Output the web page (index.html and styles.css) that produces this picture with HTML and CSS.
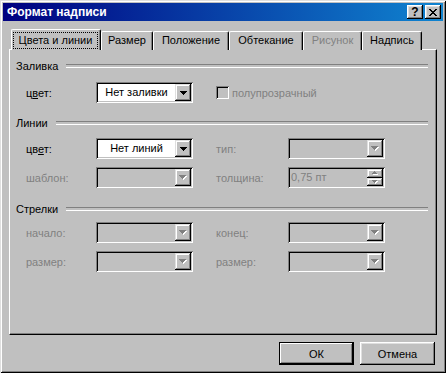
FILE: index.html
```html
<!DOCTYPE html>
<html lang="ru">
<head>
    <meta charset="UTF-8">
    <title>Формат надписи</title>
    <link rel="stylesheet" href="styles.css">
</head>
<body>
    <div class="window">
        <div class="titlebar">
            <span class="title">Формат надписи</span>
            <div class="caption-btns">
                <span class="cap-btn help">?</span>
                <span class="cap-btn close">
                    <svg width="8" height="7" viewBox="0 0 8 7"><path d="M0 0h2v1H0z M6 0h2v1H6z M1 1h2v1H1z M5 1h2v1H5z M2 2h4v1H2z M3 3h2v1H3z M2 4h4v1H2z M1 5h2v1H1z M5 5h2v1H5z M0 6h2v1H0z M6 6h2v1H6z" fill="#000"/></svg>
                </span>
            </div>
        </div>

        <div class="dialog-body">
            <div class="tabs">
                <div class="tab active"><span class="focus">Цвета и линии</span></div>
                <div class="tab tab-size">Размер</div>
                <div class="tab tab-pos">Положение</div>
                <div class="tab tab-wrap">Обтекание</div>
                <div class="tab tab-pic disabled">Рисунок</div>
                <div class="tab tab-box">Надпись</div>
            </div>

            <div class="panel">
                <!-- Заливка -->
                <div class="group-head first"><span>Заливка</span></div>
                <div class="row row-fill">
                    <span class="label">ц<u>в</u>ет:</span>
                    <div class="combo">
                        <div class="field">Нет заливки</div>
                        <div class="drop"><svg width="7" height="4" viewBox="0 0 7 4"><path d="M0 0h7v1H0z M1 1h5v1H1z M2 2h3v1H2z M3 3h1v1H3z" fill="#000"/></svg></div>
                    </div>
                    <span class="checkbox"></span>
                    <span class="label muted">полупрозрачный</span>
                </div>

                <!-- Линии -->
                <div class="group-head"><span>Линии</span></div>
                <div class="row row-first">
                    <span class="label">цв<u>е</u>т:</span>
                    <div class="combo">
                        <div class="field">Нет линий</div>
                        <div class="drop"><svg width="7" height="4" viewBox="0 0 7 4"><path d="M0 0h7v1H0z M1 1h5v1H1z M2 2h3v1H2z M3 3h1v1H3z" fill="#000"/></svg></div>
                    </div>
                    <span class="label label-r muted">тип:</span>
                    <div class="combo disabled">
                        <div class="field"></div>
                        <div class="drop"><svg width="8" height="5" viewBox="0 0 8 5"><path d="M1 1h7v1H1z M2 2h5v1H2z M3 3h3v1H3z M4 4h1v1H4z" fill="#fff"/><path d="M0 0h7v1H0z M1 1h5v1H1z M2 2h3v1H2z M3 3h1v1H3z" fill="#808080"/></svg></div>
                    </div>
                </div>
                <div class="row row-next">
                    <span class="label muted">шаблон:</span>
                    <div class="combo disabled">
                        <div class="field"></div>
                        <div class="drop"><svg width="8" height="5" viewBox="0 0 8 5"><path d="M1 1h7v1H1z M2 2h5v1H2z M3 3h3v1H3z M4 4h1v1H4z" fill="#fff"/><path d="M0 0h7v1H0z M1 1h5v1H1z M2 2h3v1H2z M3 3h1v1H3z" fill="#808080"/></svg></div>
                    </div>
                    <span class="label label-r muted">толщина:</span>
                    <div class="combo disabled spinner">
                        <div class="field value">0,75 пт</div>
                        <div class="spin">
                            <div class="spin-btn"><svg width="6" height="4" viewBox="0 0 6 4"><path d="M3 1h1v1H3z M2 2h3v1H2z M1 3h5v1H1z" fill="#fff"/><path d="M2 0h1v1H2z M1 1h3v1H1z M0 2h5v1H0z" fill="#808080"/></svg></div>
                            <div class="spin-btn"><svg width="6" height="4" viewBox="0 0 6 4"><path d="M1 1h5v1H1z M2 2h3v1H2z M3 3h1v1H3z" fill="#fff"/><path d="M0 0h5v1H0z M1 1h3v1H1z M2 2h1v1H2z" fill="#808080"/></svg></div>
                        </div>
                    </div>
                </div>

                <!-- Стрелки -->
                <div class="group-head arrows-head"><span>Стрелки</span></div>
                <div class="row row-arrows">
                    <span class="label muted">начало:</span>
                    <div class="combo disabled">
                        <div class="field"></div>
                        <div class="drop"><svg width="8" height="5" viewBox="0 0 8 5"><path d="M1 1h7v1H1z M2 2h5v1H2z M3 3h3v1H3z M4 4h1v1H4z" fill="#fff"/><path d="M0 0h7v1H0z M1 1h5v1H1z M2 2h3v1H2z M3 3h1v1H3z" fill="#808080"/></svg></div>
                    </div>
                    <span class="label label-r muted">конец:</span>
                    <div class="combo disabled">
                        <div class="field"></div>
                        <div class="drop"><svg width="8" height="5" viewBox="0 0 8 5"><path d="M1 1h7v1H1z M2 2h5v1H2z M3 3h3v1H3z M4 4h1v1H4z" fill="#fff"/><path d="M0 0h7v1H0z M1 1h5v1H1z M2 2h3v1H2z M3 3h1v1H3z" fill="#808080"/></svg></div>
                    </div>
                </div>
                <div class="row row-next">
                    <span class="label muted">размер:</span>
                    <div class="combo disabled">
                        <div class="field"></div>
                        <div class="drop"><svg width="8" height="5" viewBox="0 0 8 5"><path d="M1 1h7v1H1z M2 2h5v1H2z M3 3h3v1H3z M4 4h1v1H4z" fill="#fff"/><path d="M0 0h7v1H0z M1 1h5v1H1z M2 2h3v1H2z M3 3h1v1H3z" fill="#808080"/></svg></div>
                    </div>
                    <span class="label label-r muted">размер:</span>
                    <div class="combo disabled">
                        <div class="field"></div>
                        <div class="drop"><svg width="8" height="5" viewBox="0 0 8 5"><path d="M1 1h7v1H1z M2 2h5v1H2z M3 3h3v1H3z M4 4h1v1H4z" fill="#fff"/><path d="M0 0h7v1H0z M1 1h5v1H1z M2 2h3v1H2z M3 3h1v1H3z" fill="#808080"/></svg></div>
                    </div>
                </div>
            </div>

            <div class="buttons">
                <div class="btn default">ОК</div>
                <div class="btn">Отмена</div>
            </div>
        </div>
    </div>
</body>
</html>
```

FILE: styles.css
```css
* {
    box-sizing: border-box;
}
html, body {
    margin: 0;
    width: 446px;
    height: 373px;
    overflow: hidden;
    background: #c0c0c0;
    font-family: "Liberation Sans", Arial, sans-serif;
    font-size: 11px;
    color: #000;
}
.window {
    width: 446px;
    height: 373px;
    padding: 3px;
    background: #c0c0c0;
    box-shadow: inset 1px 1px #dfdfdf, inset -1px -1px #000, inset 2px 2px #fff, inset -2px -2px #808080;
    display: flex;
    flex-direction: column;
}
.titlebar {
    height: 18px;
    display: flex;
    align-items: center;
    justify-content: space-between;
    padding-left: 4px;
    background: linear-gradient(to right, #000080, #1084d0);
}
.title {
    color: #fff;
    font-weight: 700;
    font-size: 12px;
}
.caption-btns {
    display: flex;
    margin-right: 2px;
}
.cap-btn {
    width: 16px;
    height: 14px;
    background: #c0c0c0;
    box-shadow: inset -1px -1px #000, inset 1px 1px #fff, inset -2px -2px #808080, inset 2px 2px #dfdfdf;
    display: flex;
    align-items: center;
    justify-content: center;
}
.cap-btn.help {
    font-weight: 700;
    font-size: 12px;
    line-height: 14px;
}
.cap-btn.close {
    margin-left: 2px;
}

/* cuerpo del dialogo */
.dialog-body {
    flex: 1;
    display: flex;
    flex-direction: column;
    padding: 8px 6px 0 6px;
}
.tabs {
    display: flex;
    height: 21px;
    padding-left: 4px;
    position: relative;
    z-index: 1;
}
.tab {
    height: 19px;
    margin-top: 2px;
    line-height: 17px;
    text-align: center;
    background: #c0c0c0;
    border-top: 1px solid #fff;
    border-left: 1px solid #fff;
    border-right: 1px solid #000;
    box-shadow: inset -1px 0 #808080;
    border-top-left-radius: 2px;
    border-top-right-radius: 2px;
}
.tab-size { width: 52px; }
.tab-pos { width: 76px; }
.tab-wrap { width: 74px; }
.tab-pic { width: 59px; }
.tab-box { width: 60px; }
.tab.active {
    width: 90px;
    height: 21px;
    margin-top: 0;
    margin-left: -2px;
    padding: 3px 3px 0 2px;
    line-height: 15px;
}
.tab.disabled {
    color: #808080;
}
.focus {
    display: block;
    outline: 1px dotted #000;
}
.panel {
    width: 428px;
    height: 286px;
    margin-top: -1px;
    border-top: 1px solid #fff;
    border-left: 1px solid #fff;
    border-right: 1px solid #000;
    border-bottom: 1px solid #000;
    box-shadow: inset -1px -1px #808080;
    padding-top: 9px;
}
.group-head {
    display: flex;
    align-items: center;
    gap: 8px;
    height: 13px;
    margin: 13px 8px 0 6px;
}
.group-head.first {
    margin-top: 0;
}
.group-head.arrows-head {
    margin-top: 14px;
}
.group-head::after {
    content: "";
    flex: 1;
    height: 2px;
    border-top: 1px solid #808080;
    border-bottom: 1px solid #fff;
}
.row {
    display: flex;
    align-items: center;
    height: 21px;
    padding-left: 16px;
}
.row-fill {
    margin-top: 10px;
}
.row-first {
    margin-top: 9px;
}
.row-next {
    margin-top: 8px;
}
.row-arrows {
    margin-top: 7px;
}
.label {
    width: 70px;
}
.label-r {
    width: 72px;
    margin-left: 23px;
}
.muted {
    color: #808080;
}
.checkbox {
    width: 13px;
    height: 13px;
    margin: 0 3px 0 23px;
    background: #c0c0c0;
    box-shadow: inset 1px 1px #808080, inset -1px -1px #fff, inset 2px 2px #000, inset -2px -2px #c0c0c0;
}
.row-fill .muted {
    width: auto;
}

/* combobox */
.combo {
    width: 97px;
    height: 21px;
    padding: 2px;
    display: flex;
    background: #fff;
    box-shadow: inset 1px 1px #808080, inset -1px -1px #fff, inset 2px 2px #000, inset -2px -2px #c0c0c0;
}
.combo.disabled {
    background: #c0c0c0;
}
.field {
    flex: 1;
    text-align: center;
    line-height: 17px;
}
.field.value {
    text-align: left;
    color: #808080;
    padding-left: 1px;
}
.drop {
    width: 16px;
    height: 17px;
    background: #c0c0c0;
    box-shadow: inset -1px -1px #000, inset 1px 1px #dfdfdf, inset -2px -2px #808080, inset 2px 2px #fff;
    display: flex;
    align-items: center;
    justify-content: center;
}
.drop svg, .spin-btn svg {
    display: block;
}
.spin {
    width: 16px;
    display: flex;
    flex-direction: column;
}
.spin-btn {
    flex: 1;
    background: #c0c0c0;
    box-shadow: inset -1px -1px #000, inset 1px 1px #dfdfdf, inset -2px -2px #808080, inset 2px 2px #fff;
    display: flex;
    align-items: center;
    justify-content: center;
}

/* botones */
.buttons {
    display: flex;
    justify-content: flex-end;
    gap: 6px;
    margin-top: 7px;
    padding-right: 2px;
}
.btn {
    width: 75px;
    height: 23px;
    background: #c0c0c0;
    box-shadow: inset -1px -1px #000, inset 1px 1px #fff, inset -2px -2px #808080, inset 2px 2px #dfdfdf;
    display: flex;
    align-items: center;
    justify-content: center;
}
.btn.default {
    border: 1px solid #000;
    box-shadow: inset -1px -1px #000, inset 1px 1px #fff, inset -2px -2px #808080;
}
```
